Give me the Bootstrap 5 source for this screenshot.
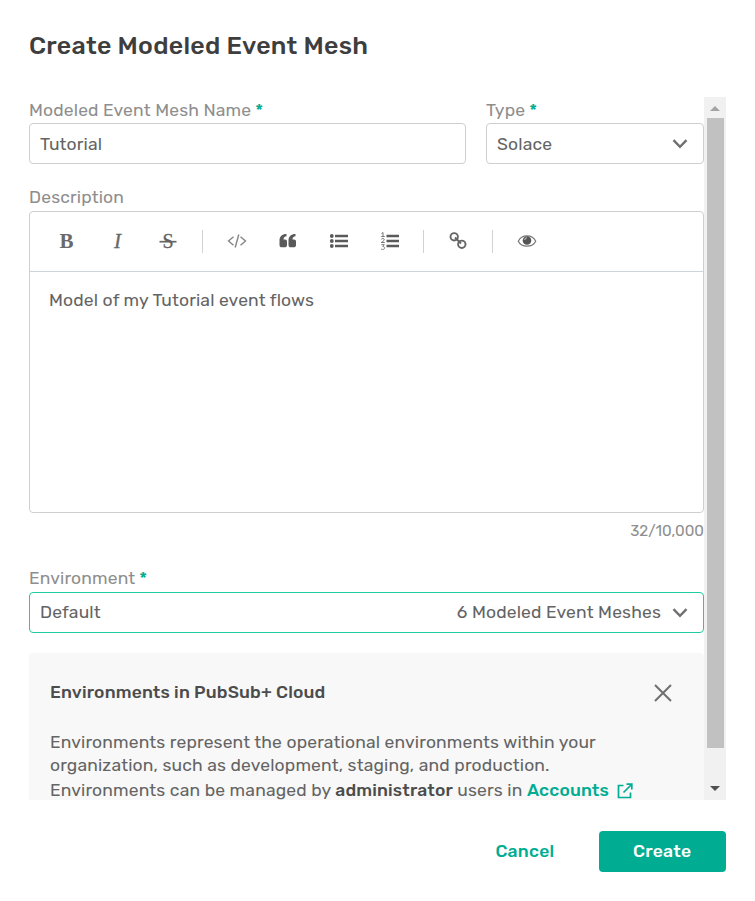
<!DOCTYPE html>
<html lang="en">
<head>
<meta charset="utf-8">
<meta name="viewport" content="width=device-width, initial-scale=1">
<title>Create Modeled Event Mesh</title>
<link href="https://cdn.jsdelivr.net/npm/bootstrap@5.3.0/dist/css/bootstrap.min.css" rel="stylesheet">
<style>
body{font-family:Rubik,Roboto,sans-serif;font-size:17.5px;font-weight:400;line-height:23px;letter-spacing:.15px;color:#646464;width:755px;height:901px;overflow:hidden}
.dialog{padding:28px 29px 0}
.dialog-title{font-size:25px;line-height:36px;font-weight:500;color:#3e3e3e;letter-spacing:.25px;margin-bottom:33px}
.scroll-pane{height:703px}
.form-area{width:675px}
.field-label{height:26px;line-height:25px;color:#8e8e8e}
.first-row .field-label{line-height:26px}
.req{color:#00ad93;font-weight:500;margin-left:4px}
.field{height:41px;border:1px solid #cfcfcf;border-radius:4px;padding:1px 10px 0}
.field.active{border-color:#1fcba0;padding-top:0}
.name-col{width:437px}
.type-col{width:218px}
.gap-form{margin-top:21px}
.editor{height:302px;border:1px solid #cfcfcf;border-radius:4px}
.tools{height:60px;border-bottom:1px solid #ced4da;padding:0 0 0 11px}
.tool{width:51px;height:38px;padding-bottom:2px;color:#6a6a6a;font:700 21px/36px "Liberation Serif",serif;letter-spacing:0}
.slanted{font-weight:400;-webkit-text-stroke:.3px #606060}
.struck{font:400 20px "Liberation Serif",serif}
.divider{width:17.3px}
.divider::before{content:"";width:1px;height:23px;background:#d2d2d2}
.eye-gap{width:1px}
.editor-text{padding:17px 19px}
.counter{height:53px;font-size:15.2px;line-height:36px;letter-spacing:.02px;color:#8e8e8e}
.info{margin-top:20px;background:#f8f8f8;border-radius:4px;padding:28px 21px 0;height:160px}
.info-title{font-weight:500;color:#4c4c4c;letter-spacing:.15px;margin-bottom:27px}
.last-line{margin-top:2px}
.accent{color:#00ad93;font-weight:500}
.strong-dark{font-weight:500;color:#4c4c4c}
.scroller{width:22px;background:#f1f1f1}
.thumb{width:17px;height:630px;background:#c1c1c1}
.actions{margin-top:31px;gap:44px}
.btn-flat{font-size:17.5px;font-weight:500;color:#00ad93;letter-spacing:.25px}
.btn-make{width:127.5px;height:41px;background:#00ad93;color:#fff;border-radius:4px;font-size:17.5px;font-weight:500;letter-spacing:.25px;line-height:39px}
.btn-make:hover{background:#00957f;color:#fff}
</style>
<script src="https://cdn.jsdelivr.net/npm/bootstrap@5.3.0/dist/js/bootstrap.bundle.min.js"></script>
</head>
<body class="bg-white">
<main class="dialog">
<h1 class="dialog-title">Create Modeled Event Mesh</h1>
<div class="scroll-pane d-flex overflow-hidden">
 <div class="form-area flex-shrink-0">
  <div class="first-row d-flex justify-content-between">
   <div class="name-col">
    <div class="field-label">Modeled Event Mesh Name<span class="req">*</span></div>
    <div class="field d-flex align-items-center">Tutorial</div>
   </div>
   <div class="type-col">
    <div class="field-label">Type<span class="req">*</span></div>
    <div class="field d-flex align-items-center justify-content-between"><span>Solace</span>
     <svg class="me-1" width="18" height="12" viewBox="0 0 18 12" fill="none" stroke="#707070" stroke-width="2.400"><path d="M2.500 2.200 9 8.800l6.500-6.600"/></svg></div>
   </div>
  </div>
  <div class="field-label gap-form">Description</div>
  <div class="editor">
   <div class="tools d-flex align-items-center">
    <div class="tool text-center">B</div>
    <div class="tool text-center fst-italic slanted">I</div>
    <div class="tool d-flex align-items-center justify-content-center"><svg width="20" height="20" viewBox="0 0 20 20"><text class="struck" x="9" y="17" text-anchor="middle" fill="#606060" stroke="#606060" stroke-width=".3">S</text><path d="M.5 10.700h17" fill="none" stroke="#666" stroke-width="1.700"/></svg></div>
    <div class="divider d-flex justify-content-center"></div>
    <div class="tool d-flex align-items-center justify-content-center"><svg width="20" height="16" viewBox="0 0 20 16" fill="none" stroke="#858585" stroke-width="1.400"><path d="M6.500 3.800 1.500 8l5 4.200M13.500 3.800l5 4.200-5 4.200M11.800 1.500 8.200 14.500"/></svg></div>
    <div class="tool d-flex align-items-center justify-content-center"><svg width="18" height="16" viewBox="0 0 18 16" fill="#5a5a5a"><path id="q" d="M7.500 1v2.300C5.700 3.400 4.500 4.500 4.500 6.500H6c1.200 0 2 .8 2 2V12c0 1.400-.9 2.300-2.300 2.300H2.800C1.400 14.300.5 13.400.5 12V7.500C.5 3.500 3 1 7.500 1Z"/><use href="#q" x="9"/></svg></div>
    <div class="tool d-flex align-items-center justify-content-center"><svg width="20" height="16" viewBox="0 0 20 16" fill="#5a5a5a"><circle cx="2.800" cy="3" r="1.900"/><circle cx="2.800" cy="8" r="1.900"/><circle cx="2.800" cy="13" r="1.900"/><path d="M6 1.700h13v2.600H6zM6 6.700h13v2.600H6zM6 11.700h13v2.600H6z"/></svg></div>
    <div class="tool d-flex align-items-center justify-content-center"><svg width="20" height="20" viewBox="0 0 20 20" fill="#5a5a5a"><path d="M6.500 3.700h12.500v2.600H6.500zM6.500 8.700h12.500v2.600H6.500zM6.500 13.700h12.500v2.600H6.500z"/><path d="M1.500 2.500 3 1.500v4M1.200 5.500h3.600M1.300 8.300c.8-1.200 3-.9 3 .4 0 1-1.800 1.700-3 2.800h3.500M1.300 13.700h3L2.800 15.500c2.500 0 2.300 3-.1 3-.7 0-1.200-.2-1.600-.6" fill="none" stroke="#777"/></svg></div>
    <div class="divider d-flex justify-content-center"></div>
    <div class="tool d-flex align-items-center justify-content-center"><svg width="18" height="18" viewBox="0 0 18 18" fill="none" stroke="#666" stroke-width="1.900"><circle cx="5.200" cy="4.800" r="3.700"/><circle cx="12.800" cy="12.300" r="3.700"/><path d="m6 5.500 6 6"/></svg></div>
    <div class="divider d-flex justify-content-center"></div>
    <div class="eye-gap"></div>
    <div class="tool d-flex align-items-center justify-content-center"><svg width="20" height="14" viewBox="0 0 20 14"><path d="M1.300 7.200C4.500.2 15.500.2 18.700 7.200 15.500 13.800 4.500 13.800 1.300 7.200Z" fill="none" stroke="#777" stroke-width="1.200"/><circle cx="10" cy="6.500" r="4.300" fill="#555"/><path d="M7.800 6c0-1.300.8-2.200 2-2.200" fill="none" stroke="#ddd"/></svg></div>
   </div>
   <div class="editor-text">Model of my Tutorial event flows</div>
  </div>
  <div class="counter text-end">32/10,000</div>
  <div class="field-label">Environment<span class="req">*</span></div>
  <div class="field active d-flex align-items-center"><span class="me-auto">Default</span><span>6 Modeled Event Meshes</span>
   <svg class="ms-2 me-1 flex-shrink-0" width="20" height="12" viewBox="-2 0 20 12" fill="none" stroke="#707070" stroke-width="2.400"><path d="M2.500 2.200 9 8.800l6.500-6.600"/></svg></div>
  <section class="info">
   <div class="info-title d-flex justify-content-between align-items-center"><span>Environments in PubSub+ Cloud</span>
    <svg class="me-2" width="24" height="22" viewBox="0 0 24 22" fill="none" stroke="#707070" stroke-width="2"><path d="m4 3 16 16M20 3 4 19"/></svg></div>
   <div class="text-nowrap">Environments represent the operational environments within your</div>
   <div class="text-nowrap">organization, such as development, staging, and production.</div>
   <div class="text-nowrap last-line">Environments can be managed by <span class="strong-dark">administrator</span> users in <span class="accent">Accounts</span><svg class="ms-2" width="16" height="16" viewBox="0 0 16 16" fill="none" stroke="#00ad93" stroke-width="1.700"><path d="M6.500 2.500H1.500v12h12v-5M9.500 1.200h5.300v5.300M14.500 1.500 6.500 9.500"/></svg></div>
  </section>
 </div>
 <div class="scroller d-flex flex-column align-items-center flex-shrink-0">
  <svg width="22" height="21" viewBox="0 0 22 21"><path d="m6 14 5-5 5 5z" fill="#a3a3a3"/></svg>
  <div class="thumb"></div>
  <svg class="mt-auto" width="22" height="21" viewBox="0 0 22 21"><path d="m6 7 5 5 5-5z" fill="#505050"/></svg>
 </div>
</div>
<div class="actions d-flex justify-content-end align-items-center">
 <button class="btn btn-flat border-0 p-0">Cancel</button>
 <button class="btn btn-make border-0 p-0">Create</button>
</div>
</main>
</body>
</html>
